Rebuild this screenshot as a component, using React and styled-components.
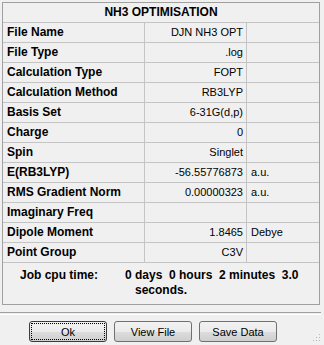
import { Fragment } from "react";
import styled, { createGlobalStyle } from "styled-components";

const GlobalStyle = createGlobalStyle`
  html, body {
    margin: 0;
    padding: 0;
    background: #f0f0f0;
  }
  body {
    font-family: "Liberation Sans", Arial, sans-serif;
    font-size: 11px;
    color: #000;
  }
`;

const Window = styled.div`
  width: 324px;
  height: 345px;
  display: flex;
  flex-direction: column;
  background: #f0f0f0;
  position: relative;
  overflow: hidden;
`;

const Panel = styled.div`
  margin: 2px 4px 0 2px;
  border: 1px solid #a0a0a0;
  display: flex;
  flex-direction: column;
`;

const Title = styled.div`
  height: 19px;
  line-height: 19px;
  text-align: center;
  font-weight: bold;
  font-size: 12px;
  border-bottom: 1px solid #c4c4c4;
`;

const Grid = styled.div`
  display: grid;
  grid-template-columns: 142px 102px 1fr;
`;

const Cell = styled.div`
  height: 19px;
  line-height: 19px;
  border-bottom: 1px solid #c4c4c4;
  border-right: ${(p) => (p.$last ? "none" : "1px solid #c4c4c4")};
  padding: 0 ${(p) => (p.$align === "right" ? "3px" : "4px")};
  text-align: ${(p) => p.$align || "left"};
  font-weight: ${(p) => (p.$bold ? "bold" : "normal")};
  font-size: ${(p) => (p.$bold ? "12px" : "11px")};
  white-space: nowrap;
  overflow: hidden;
`;

const CpuTime = styled.div`
  height: 41px;
  display: flex;
  padding: 5px 0 0 17px;
  box-sizing: border-box;
  font-weight: bold;
  font-size: 12px;
  line-height: 15px;
`;

const CpuLabel = styled.div`
  width: 105px;
`;

const CpuValue = styled.div`
  display: flex;
  flex-direction: column;
`;

const CpuLine = styled.div`
  padding-left: ${(p) => p.$indent || 0}px;
  white-space: pre;
`;

const Separator = styled.div`
  margin-top: 7px;
  height: 1px;
  border-top: 1px solid #a0a0a0;
  border-bottom: 1px solid #ffffff;
  margin-right: 3px;
`;

const ButtonBar = styled.div`
  display: flex;
  gap: 7px;
  padding: 6px 0 0 29px;
`;

const Button = styled.button`
  width: 78px;
  height: 21px;
  font-family: "Liberation Sans", Arial, sans-serif;
  font-size: 11px;
  color: #000;
  border: 1px solid ${(p) => (p.$default ? "#3c3c3c" : "#707070")};
  border-radius: 3px;
  background: linear-gradient(#f2f2f2 0%, #ebebeb 50%, #dddddd 51%, #cfcfcf 100%);
  padding: 0;
  position: relative;
  &::after {
    content: "";
    display: ${(p) => (p.$default ? "block" : "none")};
    position: absolute;
    inset: 1px;
    border: 1px dotted #000;
  }
`;

const Grip = styled.svg`
  position: absolute;
  right: 3px;
  bottom: 3px;
`;

const rows = [
  ["File Name", "DJN NH3 OPT", ""],
  ["File Type", ".log", ""],
  ["Calculation Type", "FOPT", ""],
  ["Calculation Method", "RB3LYP", ""],
  ["Basis Set", "6-31G(d,p)", ""],
  ["Charge", "0", ""],
  ["Spin", "Singlet", ""],
  ["E(RB3LYP)", "-56.55776873", "a.u."],
  ["RMS Gradient Norm", "0.00000323", "a.u."],
  ["Imaginary Freq", "", ""],
  ["Dipole Moment", "1.8465", "Debye"],
  ["Point Group", "C3V", ""],
];

const App = () => {
  return (
    <Window>
      <GlobalStyle />
      <Panel>
        <Title>NH3 OPTIMISATION</Title>
        <Grid>
          {rows.map(([label, value, unit]) => (
            <Fragment key={label}>
              <Cell $bold>{label}</Cell>
              <Cell $align="right">{value}</Cell>
              <Cell $last>{unit}</Cell>
            </Fragment>
          ))}
        </Grid>
        <CpuTime>
          <CpuLabel>Job cpu time:</CpuLabel>
          <CpuValue>
            <CpuLine>{"0 days  0 hours  2 minutes  3.0"}</CpuLine>
            <CpuLine $indent={10}>seconds.</CpuLine>
          </CpuValue>
        </CpuTime>
      </Panel>
      <Separator />
      <ButtonBar>
        <Button $default>Ok</Button>
        <Button>View File</Button>
        <Button>Save Data</Button>
      </ButtonBar>
      <Grip width="10" height="10" viewBox="0 0 10 10">
        <rect x="8" y="2" width="1" height="1" fill="#b8b8b8" />
        <rect x="5" y="5" width="1" height="1" fill="#b8b8b8" />
        <rect x="8" y="5" width="1" height="1" fill="#b8b8b8" />
        <rect x="2" y="8" width="1" height="1" fill="#b8b8b8" />
        <rect x="5" y="8" width="1" height="1" fill="#b8b8b8" />
        <rect x="8" y="8" width="1" height="1" fill="#b8b8b8" />
      </Grip>
    </Window>
  );
};

export default App;
